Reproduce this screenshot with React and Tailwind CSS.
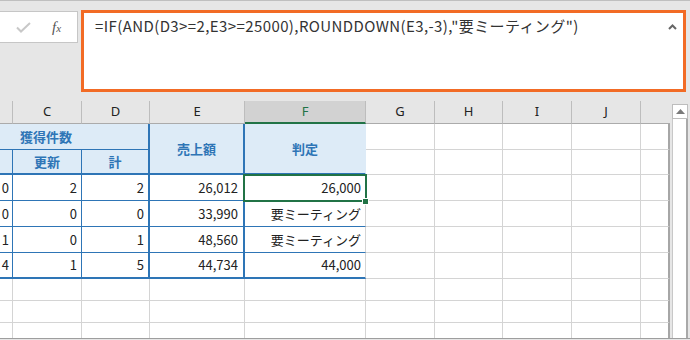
import React from "react"

const rows = [
  { b: "0", c: "2", d: "2", e: "26,012", f: "26,000" },
  { b: "0", c: "0", d: "0", e: "33,990", f: "要ミーティング" },
  { b: "1", c: "0", d: "1", e: "48,560", f: "要ミーティング" },
  { b: "4", c: "1", d: "5", e: "44,734", f: "44,000" },
]

const letters = ["", "C", "D", "E", "F", "G", "H", "I", "J", ""]

function EmptyCells() {
  return (
    <>
      <div className="border-r border-b border-[#d4d4d4] bg-white" />
      <div className="border-r border-b border-[#d4d4d4] bg-white" />
      <div className="border-r border-b border-[#d4d4d4] bg-white" />
      <div className="border-r border-b border-[#d4d4d4] bg-white" />
      <div className="border-b border-[#d4d4d4] bg-white border-r-2 border-r-[#a6a6a6]" />
    </>
  )
}

export default function App() {
  const font = { fontFamily: '"Noto Sans CJK JP", "Noto Sans", sans-serif' }

  return (
    <div className="w-[690px] h-[340px] bg-[#e6e6e6] border-t border-[#bfbfbf] overflow-hidden" style={font}>
      {/* formula bar */}
      <div className="flex items-start pt-[9px] h-[100px]">
        <div className="mt-[1px] w-[78px] h-[32px] bg-white border border-l-0 border-[#c6c6c6] flex items-center">
          <svg className="ml-[16px]" width="15" height="11" viewBox="0 0 15 11">
            <polyline points="1,5.5 5,9.5 14,1" fill="none" stroke="#c8c8c8" strokeWidth="2" />
          </svg>
          <span className="ml-[21px] text-[15px] text-[#555] italic leading-none" style={{ fontFamily: '"Liberation Serif", serif' }}>
            f<span className="text-[11px]">x</span>
          </span>
        </div>
        <div className="ml-[3px] w-[605px] h-[82px] bg-white border-[3px] border-[#f26b25] flex justify-between pl-[11px] pr-[6px] pt-[3px]">
          <span className="text-[15px] tracking-[0.4px] leading-[20px] text-[#333]">=IF(AND(D3&gt;=2,E3&gt;=25000),ROUNDDOWN(E3,-3),"要ミーティング")</span>
          <svg className="mt-[8px]" width="9" height="6" viewBox="0 0 9 6">
            <polyline points="1,5 4.5,1.5 8,5" fill="none" stroke="#666" strokeWidth="2" />
          </svg>
        </div>
      </div>

      {/* sheet */}
      <div className="flex h-[238px] border-b border-[#9e9e9e]">
        <div className="relative w-[670px] h-[237px] overflow-hidden">
          <div className="grid grid-cols-[13px_69px_68px_95px_121px_69px_68px_69px_69px_29px] grid-rows-[23px_26px_25px_26px_26px_26px_26px_22px_22px_22px] text-[13px] text-[#222]">
            {/* column letters */}
            {letters.map((l, i) =>
              l === "F" ? (
                <div key={i} className="flex items-center justify-center bg-[#d2d2d2] border-r border-r-[#bdbdbd] border-b-2 border-b-[#217346] text-[#217346]" style={{ fontFamily: '"Noto Sans", sans-serif' }}>
                  {l}
                </div>
              ) : (
                <div
                  key={i}
                  className={"flex items-center justify-center border-b border-b-[#ababab] " + (i === 9 ? "" : "border-r border-r-[#bdbdbd]")}
                  style={{ fontFamily: '"Noto Sans", sans-serif' }}
                >
                  {l}
                </div>
              )
            )}

            {/* header row 1 */}
            <div className="col-span-3 flex items-center pl-[20px] bg-[#ddebf7] border-b border-r-2 border-[#2e75b6] font-bold text-[#2e75b6]">
              獲得件数
            </div>
            <div className="row-span-2 flex items-center justify-center bg-[#ddebf7] border-r-2 border-b-2 border-[#2e75b6] font-bold text-[#2e75b6]">
              売上額
            </div>
            <div className="row-span-2 flex items-center justify-center bg-[#ddebf7] border-b-2 border-[#2e75b6] border-r border-r-[#ddebf7] font-bold text-[#2e75b6]">
              判定
            </div>
            <EmptyCells />

            {/* header row 2 */}
            <div className="bg-[#ddebf7] border-r border-b-2 border-[#2e75b6]" />
            <div className="flex items-center justify-center bg-[#ddebf7] border-r border-b-2 border-[#2e75b6] font-bold text-[#2e75b6]">
              更新
            </div>
            <div className="flex items-center justify-center bg-[#ddebf7] border-r-2 border-b-2 border-[#2e75b6] font-bold text-[#2e75b6]">
              計
            </div>
            <EmptyCells />

            {/* data rows */}
            {rows.map((r, i) => {
              const bb = i === rows.length - 1 ? "border-b-2" : "border-b"
              return (
                <React.Fragment key={i}>
                  <div className={"flex items-center justify-end pr-[3px] bg-white border-r border-[#2e75b6] " + bb}>{r.b}</div>
                  <div className={"flex items-center justify-end pr-[4px] bg-white border-r border-[#2e75b6] " + bb}>{r.c}</div>
                  <div className={"flex items-center justify-end pr-[4px] bg-white border-r-2 border-[#2e75b6] " + bb}>{r.d}</div>
                  <div className={"flex items-center justify-end pr-[5px] bg-white border-r-2 border-[#2e75b6] " + bb}>{r.e}</div>
                  <div className={"flex items-center justify-end pr-[4px] bg-white border-r border-r-[#d4d4d4] border-[#2e75b6] " + bb}>{r.f}</div>
                  <EmptyCells />
                </React.Fragment>
              )
            })}

            {/* empty rows */}
            {[0, 1, 2].map((i) => (
              <React.Fragment key={i}>
                <div className="border-r border-b border-[#d4d4d4] bg-white" />
                <div className="border-r border-b border-[#d4d4d4] bg-white" />
                <div className="border-r border-b border-[#d4d4d4] bg-white" />
                <div className="border-r border-b border-[#d4d4d4] bg-white" />
                <div className="border-r border-b border-[#d4d4d4] bg-white" />
                <EmptyCells />
              </React.Fragment>
            ))}
          </div>

          {/* active cell F3 */}
          <div className="absolute left-[243px] top-[73px] w-[124px] h-[28px] border-2 border-[#217346]" />
          <div className="absolute left-[362px] top-[97px] w-[7px] h-[7px] bg-[#217346] border border-white" />
        </div>

        {/* vertical scrollbar */}
        <div className="w-[20px] flex flex-col pl-[2px] pr-[2px] pt-[3px]">
          <div className="h-[15px] bg-white border border-[#bdbdbd] flex items-center justify-center">
            <svg width="9" height="5" viewBox="0 0 9 5">
              <polygon points="0,5 4.5,0 9,5" fill="#7a7a7a" />
            </svg>
          </div>
          <div className="flex-1 bg-white border-l border-[#c8c8c8] border-r-2 border-r-[#a9a9a9]" />
        </div>
      </div>
    </div>
  )
}
